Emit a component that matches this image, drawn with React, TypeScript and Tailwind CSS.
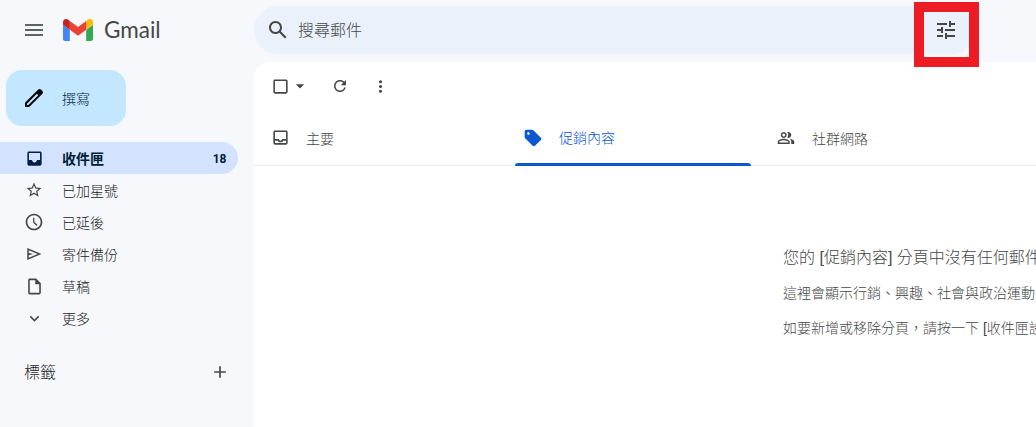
import React from 'react';

interface IconProps {
  d: string;
  size?: number;
  className?: string;
}

interface NavItem {
  label: string;
  icon: string;
  size: number;
  count?: number;
}

const ICONS = {
  menu: 'M3 18h18v-2H3v2zm0-5h18v-2H3v2zm0-7v2h18V6H3z',
  pencil: 'M20.41 4.94l-1.35-1.35c-.78-.78-2.05-.78-2.83 0L3 16.82V21h4.18L20.41 7.77c.79-.78.79-2.05 0-2.83zm-14 14.12L5 19v-1.36l9.82-9.82 1.41 1.41-9.82 9.83z',
  inbox: 'M19 3H5c-1.1 0-2 .9-2 2v14c0 1.1.9 2 2 2h14c1.1 0 2-.9 2-2V5c0-1.1-.9-2-2-2zm0 11h-4c0 1.66-1.35 3-3 3s-3-1.34-3-3H5V5h14v9z',
  inboxOutline: 'M19 3H5c-1.1 0-2 .9-2 2v14c0 1.1.9 2 2 2h14c1.1 0 2-.9 2-2V5c0-1.1-.9-2-2-2zm0 16H5v-3h3.56c.69 1.19 1.97 2 3.45 2s2.75-.81 3.45-2H19v3zm0-5h-4.99c0 1.1-.9 2-2 2s-2-.9-2-2H5V5h14v9z',
  star: 'M22 9.24l-7.19-.62L12 2 9.19 8.63 2 9.24l5.46 4.73L5.82 21 12 17.27 18.18 21l-1.63-7.03L22 9.24zM12 15.4l-3.76 2.27 1-4.28-3.32-2.88 4.38-.38L12 6.1l1.71 4.04 4.38.38-3.32 2.88 1 4.28L12 15.4z',
  clock: 'M11.99 2C6.47 2 2 6.48 2 12s4.47 10 9.99 10C17.52 22 22 17.52 22 12S17.52 2 11.99 2zM12 20c-4.42 0-8-3.58-8-8s3.58-8 8-8 8 3.58 8 8-3.58 8-8 8zm.5-13H11v6l4.2 3.8 1.1-1.3-3.8-3.4V7z',
  send: 'M3 4v16l19-8L3 4zm2 3l11.85 5L5 17v-3.5l6-1.5-6-1.5V7z',
  draft: 'M14 2H6c-1.1 0-2 .9-2 2v16c0 1.1.9 2 2 2h12c1.1 0 2-.9 2-2V8l-6-6zM6 20V4h7v5h5v11H6z',
  chevron: 'M16.59 8.59L12 13.17 7.41 8.59 6 10l6 6 6-6-1.41-1.41z',
  plus: 'M19 13h-6v6h-2v-6H5v-2h6V5h2v6h6v2z',
  search: 'M20.49 19l-5.73-5.73C15.53 12.2 16 10.91 16 9.5 16 5.91 13.09 3 9.5 3S3 5.91 3 9.5 5.91 16 9.5 16c1.41 0 2.7-.47 3.77-1.24L19 20.49 20.49 19zM5 9.5C5 7.01 7.01 5 9.5 5S14 7.01 14 9.5 11.99 14 9.5 14 5 11.99 5 9.5z',
  tune: 'M3 17v2h6v-2H3zM3 5v2h10V5H3zm10 16v-2h8v-2h-8v-2h-2v6h2zM7 9v2H3v2h4v2h2V9H7zm14 4v-2H11v2h10zm-6-4h2V7h4V5h-4V3h-2v6z',
  checkbox: 'M19 5v14H5V5h14m0-2H5c-1.1 0-2 .9-2 2v14c0 1.1.9 2 2 2h14c1.1 0 2-.9 2-2V5c0-1.1-.9-2-2-2z',
  caret: 'M7 10l5 5 5-5z',
  refresh: 'M17.65 6.35C16.2 4.9 14.21 4 12 4c-4.42 0-7.99 3.58-7.99 8s3.57 8 7.99 8c3.73 0 6.84-2.55 7.73-6h-2.08c-.82 2.33-3.04 4-5.65 4-3.31 0-6-2.69-6-6s2.69-6 6-6c1.66 0 3.14.69 4.22 1.78L13 11h7V4l-2.35 2.35z',
  more: 'M12 8c1.1 0 2-.9 2-2s-.9-2-2-2-2 .9-2 2 .9 2 2 2zm0 2c-1.1 0-2 .9-2 2s.9 2 2 2 2-.9 2-2-.9-2-2-2zm0 6c-1.1 0-2 .9-2 2s.9 2 2 2 2-.9 2-2-.9-2-2-2z',
  tag: 'M21.41 11.58l-9-9C12.05 2.22 11.55 2 11 2H4c-1.1 0-2 .9-2 2v7c0 .55.22 1.05.59 1.42l9 9c.36.36.86.58 1.41.58.55 0 1.05-.22 1.41-.59l7-7c.37-.36.59-.86.59-1.41 0-.55-.23-1.06-.59-1.42zM6.5 8C5.67 8 5 7.33 5 6.5S5.67 5 6.5 5 8 5.67 8 6.5 7.33 8 6.5 8z',
  people: 'M9 12c2.21 0 4-1.79 4-4s-1.79-4-4-4-4 1.79-4 4 1.79 4 4 4zm0-6c1.1 0 2 .9 2 2s-.9 2-2 2-2-.9-2-2 .9-2 2-2zm0 7c-2.67 0-8 1.34-8 4v3h16v-3c0-2.66-5.33-4-8-4zm6 5H3v-1c.22-.72 3.31-2 6-2 2.7 0 5.8 1.29 6 2v1zM15 12c2.21 0 4-1.79 4-4s-1.79-4-4-4c-.47 0-.91.1-1.33.24C14.5 5.27 15 6.58 15 8s-.5 2.73-1.33 3.76c.42.14.86.24 1.33.24zm1.66 1.13C18.03 14.07 19 15.32 19 17v3h4v-3c0-2.18-3.58-3.47-6.34-3.87z',
};

const NAV: NavItem[] = [
  { label: '收件匣', icon: ICONS.inbox, size: 19, count: 18 },
  { label: '已加星號', icon: ICONS.star, size: 18 },
  { label: '已延後', icon: ICONS.clock, size: 20 },
  { label: '寄件備份', icon: ICONS.send, size: 18 },
  { label: '草稿', icon: ICONS.draft, size: 19 },
  { label: '更多', icon: ICONS.chevron, size: 19 },
];

const Icon: React.FC<IconProps> = ({ d, size = 20, className = '' }) => (
  <svg width={size} height={size} viewBox="0 0 24 24" fill="currentColor" className={`shrink-0 ${className}`}>
    <path fillRule="evenodd" d={d} />
  </svg>
);

const GmailLogo: React.FC = () => (
  <svg width="30" height="22" viewBox="52 42 88 66" preserveAspectRatio="none" className="shrink-0">
    <path fill="#4285f4" d="M58 108h14V74L52 59v43c0 3.32 2.69 6 6 6" />
    <path fill="#34a853" d="M120 108h14c3.32 0 6-2.69 6-6V59l-20 15" />
    <path fill="#fbbc04" d="M120 48v26l20-15v-8c0-7.42-8.47-11.65-14.4-7.2" />
    <path fill="#ea4335" d="M72 74V48l24 18 24-18v26L96 92" />
    <path fill="#c5221f" d="M52 51v8l20 15V48l-5.6-4.2c-5.94-4.45-14.4-.22-14.4 7.2" />
  </svg>
);

const App: React.FC = () => {
  return (
    <div className="flex h-[427px] w-[1036px] overflow-hidden bg-[#f6f8fc] font-['Liberation_Sans','Noto_Sans_CJK_TC',sans-serif] text-sm font-light text-[#202124]">
      <aside className="w-[254px] shrink-0">
        <div className="flex h-[60px] items-center pl-[22px]">
          <Icon d={ICONS.menu} size={24} className="text-[#5f6368]" />
          <div className="ml-[17px] flex items-center">
            <GmailLogo />
            <span className="ml-[11px] font-[Lato,sans-serif] text-[22.5px] leading-none font-normal text-[#444746]">Gmail</span>
          </div>
        </div>

        <button className="mt-[10px] ml-[6px] flex h-14 w-[120px] items-center rounded-2xl bg-[#c2e7ff] pl-4 text-[#001d35]">
          <Icon d={ICONS.pencil} size={24} className="text-black" />
          <span className="ml-4 pt-px">撰寫</span>
        </button>

        <nav className="mt-4">
          {NAV.map((item) => (
            <div
              key={item.label}
              className={`flex h-8 w-[238px] items-center rounded-r-full pr-3 pl-6 ${item.count ? 'bg-[#d3e3fd] font-bold text-[#001d35]' : ''}`}
            >
              <div className={`flex w-5 justify-center ${item.count ? 'text-[#041e49]' : 'text-[#444746]'}`}>
                <Icon d={item.icon} size={item.size} />
              </div>
              <span className="ml-[18px] flex-1 pt-px">{item.label}</span>
              {item.count && <span className="pt-px font-[Roboto,sans-serif] text-xs tracking-tight">{item.count}</span>}
            </div>
          ))}
        </nav>

        <div className="mt-[28px] flex h-[20px] w-[230px] items-center justify-between pl-6 text-base">
          <span className="pt-[2px]">標籤</span>
          <Icon d={ICONS.plus} size={20} className="text-[#444746]" />
        </div>
      </aside>

      <div className="flex min-w-0 flex-1 flex-col">
        <header className="mt-[6px] flex h-12 w-[722px] shrink-0 items-center rounded-full bg-[#eaf1fb] pr-[18px] pl-3 text-[#444746]">
          <Icon d={ICONS.search} size={24} />
          <span className="ml-2 flex-1 pt-[2px] text-base text-[#444746]">搜尋郵件</span>
          <div className="relative">
            <Icon d={ICONS.tune} size={24} />
            <div className="absolute -top-4 -left-5 size-[65px] border-10 border-[#ed1c24]" />
          </div>
        </header>

        <main className="mt-2 flex-1 rounded-tl-2xl bg-white">
          <div className="flex h-12 items-center pl-4 text-[#444746]">
            <Icon d={ICONS.checkbox} size={19} className="mx-[0.5px]" />
            <Icon d={ICONS.caret} />
            <Icon d={ICONS.refresh} size={18} className="ml-[21px]" />
            <Icon d={ICONS.more} size={19} className="ml-[21.5px]" />
          </div>

          <div className="flex h-14 border-b border-[#eceff1] text-[#444746]">
            <div className="flex w-[261px] shrink-0 items-center pl-4">
              <Icon d={ICONS.inboxOutline} size={19} className="mx-[0.5px]" />
              <span className="ml-4 pt-[2px]">主要</span>
            </div>
            <div className="-mb-px flex w-[236px] shrink-0 flex-col text-[#0b57d0]">
              <div className="flex h-[54px] items-center pt-[2px] pl-2">
                <Icon d={ICONS.tag} />
                <span className="ml-4 pt-px">促銷內容</span>
              </div>
              <div className="h-[3px] rounded-t-[3px] bg-[#0b57d0]" />
            </div>
            <div className="flex items-center pl-[26px]">
              <Icon d={ICONS.people} size={18} className="mr-px" />
              <span className="ml-4 pt-[2px]">社群網路</span>
            </div>
          </div>

          <div className="pt-[76px] pl-[529px] whitespace-nowrap text-[#444746]">
            <p className="text-[16px] leading-[32px]">您的 [促銷內容] 分頁中沒有任何郵件。</p>
            <p className="mt-[2px] leading-[34px]">這裡會顯示行銷、興趣、社會與政治運動的</p>
            <p className="leading-[36px]">如要新增或移除分頁，請按一下 [收件匣設定]</p>
          </div>
        </main>
      </div>
    </div>
  );
};

export default App;
